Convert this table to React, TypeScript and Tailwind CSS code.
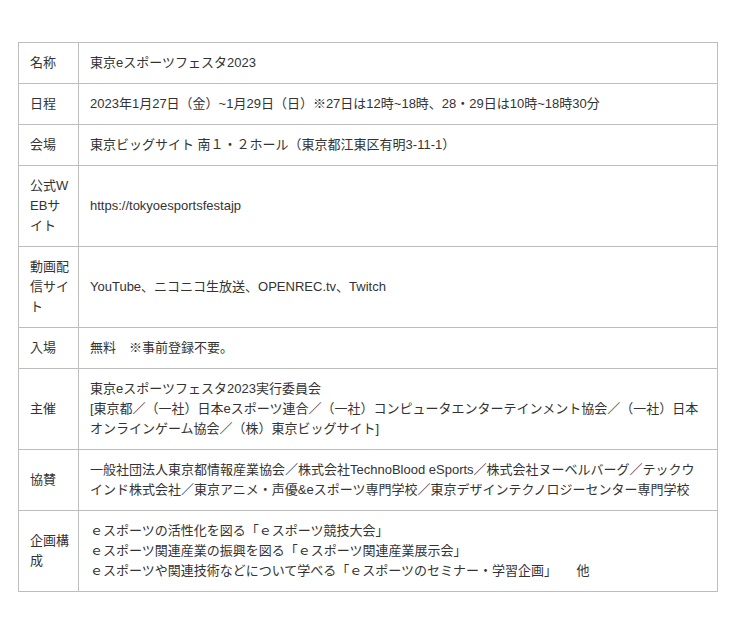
import React from "react";

const rows: { label: string; lines: string[] }[] = [
  { label: "名称", lines: ["東京eスポーツフェスタ2023"] },
  {
    label: "日程",
    lines: ["2023年1月27日（金）~1月29日（日）※27日は12時~18時、28・29日は10時~18時30分"],
  },
  { label: "会場", lines: ["東京ビッグサイト 南１・２ホール（東京都江東区有明3-11-1）"] },
  { label: "公式WEBサイト", lines: ["https://tokyoesportsfestajp"] },
  { label: "動画配信サイト", lines: ["YouTube、ニコニコ生放送、OPENREC.tv、Twitch"] },
  { label: "入場", lines: ["無料　※事前登録不要。"] },
  {
    label: "主催",
    lines: [
      "東京eスポーツフェスタ2023実行委員会",
      "[東京都／（一社）日本eスポーツ連合／（一社）コンピュータエンターテインメント協会／（一社）日本オンラインゲーム協会／（株）東京ビッグサイト]",
    ],
  },
  {
    label: "協賛",
    lines: [
      "一般社団法人東京都情報産業協会／株式会社TechnoBlood eSports／株式会社ヌーベルバーグ／テックウインド株式会社／東京アニメ・声優&eスポーツ専門学校／東京デザインテクノロジーセンター専門学校",
    ],
  },
  {
    label: "企画構成",
    lines: [
      "ｅスポーツの活性化を図る「ｅスポーツ競技大会」",
      "ｅスポーツ関連産業の振興を図る「ｅスポーツ関連産業展示会」",
      "ｅスポーツや関連技術などについて学べる「ｅスポーツのセミナー・学習企画」　　他",
    ],
  },
];

export default function App() {
  return (
    <div
      className="w-[740px] h-[632px] bg-white pt-[42px] pl-[18px] text-[13px] leading-[20px] text-[#333]"
      style={{ fontFamily: '"Liberation Sans", "Noto Sans CJK JP", sans-serif' }}
    >
      <table className="w-[700px] border-collapse table-fixed">
        <colgroup>
          <col className="w-[60px]" />
          <col />
        </colgroup>
        <tbody>
          {rows.map((r) => (
            <tr key={r.label}>
              <td className="border border-[#bdbdbd] pl-[11px] pr-[5px] py-[10px] align-middle break-all">
                {r.label}
              </td>
              <td className="border border-[#bdbdbd] px-[11px] py-[10px] align-middle break-all">
                {r.lines.map((l, i) => (
                  <div key={i}>{l}</div>
                ))}
              </td>
            </tr>
          ))}
        </tbody>
      </table>
    </div>
  );
}
